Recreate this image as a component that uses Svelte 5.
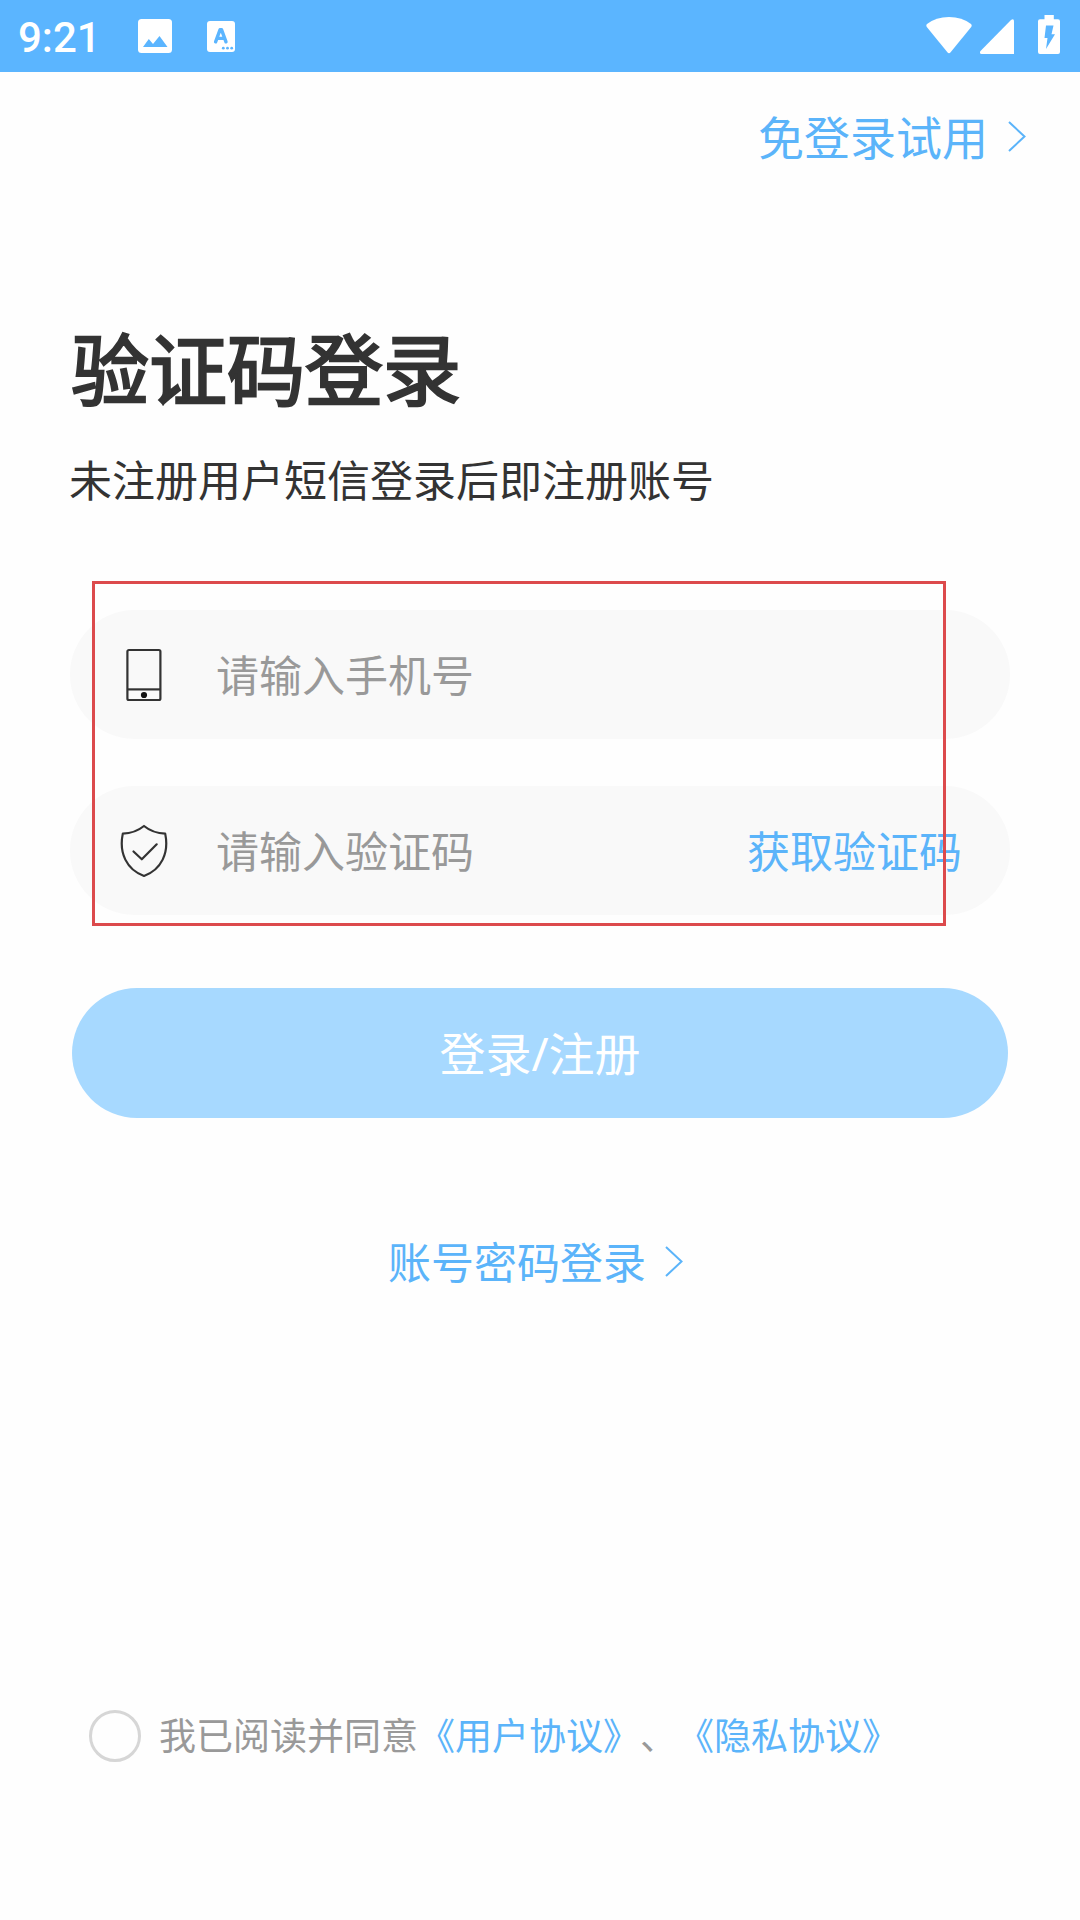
<script lang="ts">
  let phone = '';
  let code = '';
  let agreed = false;
</script>

<div class="screen">
  <header class="statusbar">
    <span class="time">9:21</span>
    <svg class="photo" width="34" height="34" viewBox="0 0 34 34">
      <rect width="34" height="34" rx="3.5" fill="#fff" />
      <path d="M5 28 L10.8 20 L15 25 L21.5 17 L29.5 28 Z" fill="#5bb5ff" />
    </svg>
    <svg class="letter" width="28" height="31" viewBox="0 0 28 31">
      <rect width="28" height="31" rx="3" fill="#fff" />
      <path d="M8.6 20.8 L13 8.8 H14.6 L19 20.8 M10.5 17.4 H17.5" fill="none" stroke="#5bb5ff" stroke-width="3.4" stroke-linejoin="round" stroke-linecap="round" />
      <g fill="#5bb5ff">
        <circle cx="16.3" cy="27.2" r="1.4" />
        <circle cx="20.5" cy="27.2" r="1.4" />
        <circle cx="24.7" cy="27.2" r="1.4" />
      </g>
    </svg>
    <div class="system">
      <svg width="46" height="37" viewBox="0 0 46 37">
        <path d="M1 7 Q10 0 23 0 Q36 0 45 7 Q46.3 8.4 45.2 10 L24.6 35.3 Q23 37 21.4 35.3 L0.8 10 Q-0.3 8.4 1 7 Z" fill="#fff" />
      </svg>
      <svg width="34" height="35" viewBox="0 0 34 35">
        <path d="M1.5 35 Q-1 34.5 0.5 32 L31 1 Q34 -0.8 34 2.5 V35 Z" fill="#fff" />
      </svg>
      <svg class="battery" width="22" height="39" viewBox="0 0 22 39">
        <path d="M6.5 0 H15.8 V4.3 H20 Q22 4.3 22 6.3 V37 Q22 39 20 39 H2 Q0 39 0 37 V6.3 Q0 4.3 2 4.3 H6.5 Z" fill="#fff" />
        <path d="M8 10.5 H15.5 L13.5 19.2 H17 L8 34 L9.5 23 H6.5 Z" fill="#5bb5ff" />
      </svg>
    </div>
  </header>

  <nav class="trial">
    <a href="#trial">免登录试用</a>
    <svg class="arrow" width="18" height="31" viewBox="0 0 18 31">
      <path d="M1 1 L16.5 15.5 L1 30" />
    </svg>
  </nav>

  <main>
    <h1>验证码登录</h1>
    <p class="subtitle">未注册用户短信登录后即注册账号</p>

    <form on:submit|preventDefault>
      <div class="fields">
        <label class="field">
          <svg width="48" height="54" viewBox="0 0 48 54" fill="none" stroke="#333" stroke-width="2.2">
            <rect x="7.4" y="2" width="33" height="50" rx="1.5" />
            <path d="M8 41.4 H40" />
            <circle cx="24" cy="47" r="3.1" fill="#111" stroke="none" />
          </svg>
          <input bind:value={phone} placeholder="请输入手机号" />
        </label>
        <label class="field">
          <svg width="48" height="54" viewBox="0 0 48 54" fill="none" stroke="#333" stroke-width="2.2" stroke-linejoin="round" stroke-linecap="round">
            <path d="M24 2 Q33 9.3 45.2 9.6 C49.2 29 41.5 45.5 24 52 C6.5 45.5 -1.2 29 2.8 9.6 Q15 9.3 24 2 Z" />
            <path d="M13.5 27.5 L21.8 35.3 L36.7 20.3" />
          </svg>
          <input bind:value={code} placeholder="请输入验证码" />
          <button type="button" class="getcode">获取验证码</button>
        </label>
        <div class="highlight"></div>
      </div>
      <button class="submit" type="submit">登录/注册</button>
    </form>

    <div class="password">
      <a href="#password">账号密码登录</a>
      <svg class="arrow" width="18" height="31" viewBox="0 0 18 31">
        <path d="M1 1 L16.5 15.5 L1 30" />
      </svg>
    </div>
  </main>

  <footer>
    <button class="radio" class:agreed aria-label="同意" on:click={() => (agreed = !agreed)}></button>
    <p>我已阅读并同意<a href="#terms">《用户协议》</a>、<a href="#privacy">《隐私协议》</a></p>
  </footer>
</div>

<style>
  :global(body) {
    background: #fefefe;
  }

  .screen {
    width: 1080px;
    height: 1920px;
    display: flex;
    flex-direction: column;
    overflow: hidden;
    background: #fefefe;
    color: #333;
    font-family: 'Noto Sans', 'Noto Sans CJK SC', sans-serif;
    text-spacing-trim: space-all;
  }
  svg { display: block; flex: none; }
  a { color: #5bb4fa; text-decoration: none; }
  button, input {
    font-family: inherit;
    border: 0;
    padding: 0;
    background: none;
    outline: none;
  }

  .statusbar {
    display: flex;
    align-items: center;
    height: 72px;
    flex: none;
    box-sizing: border-box;
    padding: 0 20px 0 18px;
    background: #5bb5ff;
    color: #fff;
  }
  .time {
    width: 120px;
    font: 500 42px/50px Roboto, sans-serif;
    padding-top: 4px;
  }
  .letter { margin-left: 35px; }
  .system {
    display: flex;
    align-items: flex-end;
    margin-left: auto;
    margin-bottom: 3px;
    gap: 8px;
  }
  .battery { margin-left: 16px; }

  .trial {
    display: flex;
    align-items: center;
    justify-content: flex-end;
    gap: 20px;
    height: 66px;
    margin-top: 32px;
    padding: 0 54px 0 0;
    font-size: 46px;
    line-height: 66px;
  }
  .arrow {
    fill: none;
    stroke: #5bb4fa;
    stroke-width: 2;
  }
  .trial .arrow { margin-bottom: 2px; }

  main { padding: 0 70px; }
  h1 {
    margin: 143px 0 0 1px;
    font-size: 78px;
    font-weight: 400;
    line-height: 114px;
    -webkit-text-stroke: 2.4px #333;
  }
  .subtitle {
    margin: 23px 0 0 -1px;
    font-size: 43px;
    line-height: 62px;
    white-space: nowrap;
  }

  .fields {
    position: relative;
    display: flex;
    flex-direction: column;
    gap: 47px;
    margin-top: 98px;
  }
  .field {
    display: flex;
    align-items: center;
    height: 129px;
    box-sizing: border-box;
    padding: 0 48px 0 50px;
    border-radius: 65px;
    background: #f9f9f9;
  }
  input {
    flex: 1;
    min-width: 0;
    margin-left: 48px;
    padding-top: 2px;
    font-size: 43px;
    height: 64px;
    color: #333;
  }
  input::placeholder { color: #999; opacity: 1; }
  .getcode {
    padding-top: 2px;
    font-size: 43px;
    line-height: 62px;
    color: #5bb4fa;
  }
  /* red frame laid over both inputs */
  .highlight {
    position: absolute;
    left: 22px;
    top: -29px;
    width: 854px;
    height: 345px;
    box-sizing: border-box;
    border: 3px solid #dc4a4c;
    pointer-events: none;
  }

  .submit {
    display: block;
    width: 936px;
    height: 130px;
    margin: 73px auto 0;
    border-radius: 65px;
    background: #a7d9ff;
    color: #fff;
    font-size: 46px;
    line-height: 66px;
  }

  .password {
    display: flex;
    align-items: center;
    justify-content: center;
    gap: 19px;
    margin-top: 114px;
    padding-right: 9px;
    font-size: 43px;
    line-height: 62px;
  }
  .password .arrow { margin-bottom: 3px; }

  footer {
    display: flex;
    align-items: center;
    margin-top: auto;
    padding: 0 0 157px 89px;
  }
  .radio {
    width: 52px;
    height: 52px;
    border: 3px solid #d6d6d6;
    border-radius: 50%;
  }
  .radio.agreed { background: #5bb4fa; }
  footer p {
    margin: 0 0 0 18px;
    font-size: 37px;
    line-height: 54px;
    color: #999;
    white-space: nowrap;
  }
</style>
